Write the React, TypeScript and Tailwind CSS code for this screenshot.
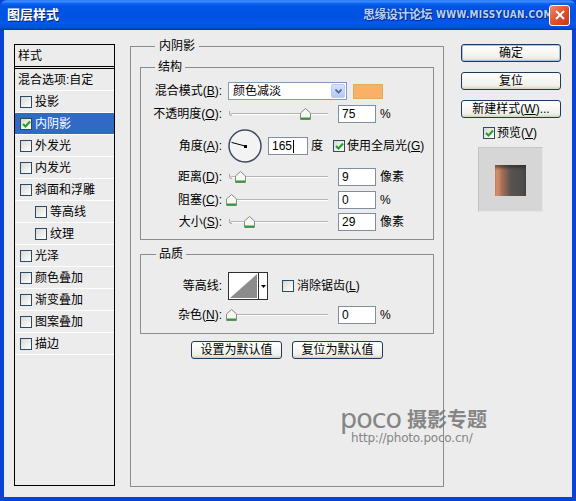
import React from "react";

// little XP style checkbox
function Check({ checked = false }: { checked?: boolean }) {
  return (
    <span className="w-[12px] h-[12px] shrink-0 border border-[#2c4a68] bg-[linear-gradient(135deg,#d8d8d2,#ffffff)] flex items-center justify-center">
      {checked && (
        <svg width="9" height="8" viewBox="0 0 9 8">
          <path d="M1 4 L3.5 6.5 L8 1.5" stroke="#21a121" strokeWidth="2" fill="none" />
        </svg>
      )}
    </span>
  );
}

function Slider({ pos }: { pos: number }) {
  return (
    <div className="relative w-[104px] h-[18px] ml-[4px] shrink-0">
      <div className="absolute left-[5px] right-[2px] top-[8px] h-[2px] bg-[#b4b4b4] border-b border-white" />
      <div className="absolute left-[3px] top-[6px] w-[3px] h-[5px] border-l border-b border-[#a8a8a8] rounded-bl-[3px]" />
      <svg className="absolute top-[3px]" style={{ left: pos }} width="11" height="12" viewBox="0 0 11 12">
        <path d="M0.5 5 L5.5 0.5 L10.5 5 V11.5 H0.5 Z" fill="#f7f7f2" stroke="#848c84" />
        <path d="M1 10.5 H10" stroke="#2f9a3a" strokeWidth="2" />
      </svg>
    </div>
  );
}

function NumBox({ value, w = "w-[38px]", ml = "ml-[8px]" }: { value: string; w?: string; ml?: string }) {
  return (
    <div className={`${w} ${ml} h-[18px] shrink-0 border border-[#7f8fa0] bg-white pl-[3px] text-[12px] leading-[16px]`}>{value}</div>
  );
}

function XpButton({ children, def = false, w = "w-[100px]" }: { children: React.ReactNode; def?: boolean; w?: string }) {
  return (
    <div
      className={`${w} h-[18px] flex items-center justify-center rounded-[3px] border border-[#1d3a5c] bg-[linear-gradient(to_bottom,#ffffff,#f0f0ea_80%,#d6d0c5)] text-[12px] leading-[14px] ${def ? "shadow-[inset_0_0_0_1px_#a8c2ee]" : ""}`}
    >
      {children}
    </div>
  );
}

const items: { name: string; indent?: boolean; checked?: boolean; selected?: boolean }[] = [
  { name: "投影" },
  { name: "内阴影", checked: true, selected: true },
  { name: "外发光" },
  { name: "内发光" },
  { name: "斜面和浮雕" },
  { name: "等高线", indent: true },
  { name: "纹理", indent: true },
  { name: "光泽" },
  { name: "颜色叠加" },
  { name: "渐变叠加" },
  { name: "图案叠加" },
  { name: "描边" },
];

export default function App() {
  return (
    <div className="relative w-[576px] h-[501px] flex flex-col bg-[#0842d8] text-black font-['Liberation_Sans','Noto_Sans_CJK_SC',sans-serif] text-[12px]">
      {/* title bar */}
      <div className="relative h-[30px] shrink-0 flex items-center rounded-t-[7px] bg-[linear-gradient(to_bottom,#2a7af5_0%,#3a8cff_6%,#0a63f0_12%,#0055e5_22%,#0052e0_60%,#0458f0_78%,#0050d8_92%,#0038a8_100%)]">
        <span className="ml-[7px] text-white font-bold text-[13px] leading-[16px] [text-shadow:1px_1px_0_#0a246a]">图层样式</span>
        <div className="absolute left-[363px] top-[7px] flex items-center gap-[4px] text-[#b4d2fa] [text-shadow:0_0_1px_#0a2a80,0_0_1px_#0a2a80,1px_1px_0_#0a2a80] leading-[16px]">
          <span className="text-[12px] font-bold tracking-[-0.5px]">思缘设计论坛</span>
          <span className="text-[10px] font-bold tracking-[0.3px] font-['DejaVu_Sans_Condensed','DejaVu_Sans',sans-serif]">WWW.MISSYUAN.COM</span>
        </div>
        <div className="relative ml-auto mr-[6px] w-[21px] h-[21px] rounded-[3px] border border-white bg-[linear-gradient(135deg,#f08a6a,#e2502c_50%,#c8381a)] flex items-center justify-center">
          <svg width="10" height="10" viewBox="0 0 10 10">
            <path d="M1 1 L9 9 M9 1 L1 9" stroke="#ffffff" strokeWidth="2" />
          </svg>
        </div>
      </div>

      {/* client area */}
      <div className="flex-1 mx-[4px] mb-[4px] bg-[#ececec] flex items-start pl-[10px]">
        {/* left style list */}
        <div className="mt-[14px] w-[101px] h-[442px] border border-black bg-[#ececec] flex flex-col">
          <div className="h-[21px] flex items-center pl-[3px] leading-[14px]">样式</div>
          <div className="h-[3px] border-y border-black" />
          <div className="h-[22px] flex items-center pl-[3px] border-b border-white leading-[14px]">混合选项:自定</div>
          {items.map((it) => (
            <div
              key={it.name}
              className={`h-[22px] flex items-center border-b border-white ${it.indent ? "pl-[20px]" : "pl-[5px]"} ${it.selected ? "bg-[#316ac5] text-white" : ""}`}
            >
              <Check checked={it.checked} />
              <span className="ml-[3px] leading-[14px]">{it.name}</span>
            </div>
          ))}
        </div>

        {/* middle group */}
        <fieldset className="mt-[9px] ml-[15px] w-[314px] h-[448px] border border-[#8c8c8c] px-[9px]">
          <legend className="ml-[15px] px-[4px] leading-[14px]">内阴影</legend>

          <fieldset className="mt-[7px] border border-[#8c8c8c] pb-[8px]">
            <legend className="ml-[14px] px-[3px] leading-[14px]">结构</legend>

            <div className="mt-[8px] h-[18px] flex items-center">
              <span className="w-[81px] text-right leading-[14px]">混合模式(<u>B</u>):</span>
              <div className="ml-[6px] w-[119px] h-[18px] border border-[#7f9db9] bg-white flex items-center">
                <span className="ml-[4px] leading-[14px]">颜色减淡</span>
                <div className="ml-auto mr-[1px] w-[14px] h-[14px] rounded-[2px] bg-[linear-gradient(to_bottom,#d6e2fd,#b2c8f6)] border border-[#b9ccf5] flex items-center justify-center">
                  <svg width="7" height="5" viewBox="0 0 7 5">
                    <path d="M0.5 0.5 L3.5 3.5 L6.5 0.5" stroke="#4d6185" strokeWidth="1.6" fill="none" />
                  </svg>
                </div>
              </div>
              <div className="ml-[6px] w-[30px] h-[15px] bg-[#fbb067] border border-[#e8a860]" />
            </div>

            <div className="mt-[5px] h-[18px] flex items-center">
              <span className="w-[81px] text-right leading-[14px]">不透明度(<u>O</u>):</span>
              <Slider pos={74} />
              <NumBox value="75" />
              <span className="ml-[4px]">%</span>
            </div>

            <div className="mt-[6px] h-[34px] flex items-center">
              <span className="w-[81px] text-right leading-[14px]">角度(<u>A</u>):</span>
              <svg className="ml-[6px] shrink-0" width="34" height="34" viewBox="0 0 34 34">
                <circle cx="17" cy="17" r="16" fill="#f3f3f3" stroke="#3e4a66" strokeWidth="1.5" />
                <path d="M17 17 L3.5 13.4" stroke="#000" strokeWidth="1" />
                <rect x="16" y="16" width="3" height="3" fill="#000" />
              </svg>
              <div className="ml-[6px] w-[40px] h-[18px] border border-[#7f8fa0] bg-white pl-[3px] leading-[16px] flex items-center">
                165<span className="w-[1px] h-[13px] bg-black ml-[1px]" />
              </div>
              <span className="ml-[3px] leading-[14px]">度</span>
              <span className="ml-[10px]"><Check checked /></span>
              <span className="ml-[2px] leading-[14px]">使用全局光(<u>G</u>)</span>
            </div>

            <div className="mt-[5px] h-[18px] flex items-center">
              <span className="w-[81px] text-right leading-[14px]">距离(<u>D</u>):</span>
              <Slider pos={9} />
              <NumBox value="9" />
              <span className="ml-[4px] leading-[14px]">像素</span>
            </div>

            <div className="mt-[5px] h-[18px] flex items-center">
              <span className="w-[81px] text-right leading-[14px]">阻塞(<u>C</u>):</span>
              <Slider pos={0} />
              <NumBox value="0" />
              <span className="ml-[4px]">%</span>
            </div>

            <div className="mt-[4px] h-[18px] flex items-center">
              <span className="w-[81px] text-right leading-[14px]">大小(<u>S</u>):</span>
              <Slider pos={18} />
              <NumBox value="29" />
              <span className="ml-[4px] leading-[14px]">像素</span>
            </div>
          </fieldset>

          <fieldset className="mt-[7px] border border-[#8c8c8c] pb-[9px]">
            <legend className="ml-[15px] px-[3px] leading-[14px]">品质</legend>

            <div className="mt-[11px] h-[28px] flex items-center">
              <span className="w-[81px] text-right leading-[14px]">等高线:</span>
              <div className="ml-[6px] w-[40px] h-[28px] border border-[#303030] bg-white flex">
                <svg width="29" height="26" viewBox="0 0 29 26" className="shrink-0">
                  <path d="M1 25 L28 1 L28 25 Z" fill="#8c8c8c" />
                </svg>
                <div className="flex-1 border-l border-[#303030] flex items-center justify-center">
                  <svg width="5" height="3" viewBox="0 0 5 3">
                    <path d="M0 0 H5 L2.5 3 Z" fill="#000" />
                  </svg>
                </div>
              </div>
              <span className="ml-[14px]"><Check /></span>
              <span className="ml-[3px] leading-[14px]">消除锯齿(<u>L</u>)</span>
            </div>

            <div className="mt-[6px] h-[18px] flex items-center">
              <span className="w-[81px] text-right leading-[14px]">杂色(<u>N</u>):</span>
              <Slider pos={0} />
              <NumBox value="0" />
              <span className="ml-[4px]">%</span>
            </div>
          </fieldset>

          <div className="mt-[7px] flex justify-center gap-[10px]">
            <XpButton w="w-[91px]">设置为默认值</XpButton>
            <XpButton w="w-[91px]">复位为默认值</XpButton>
          </div>
        </fieldset>

        {/* right column */}
        <div className="ml-[17px] w-[100px] flex flex-col">
          <div className="mt-[14px]"><XpButton def>确定</XpButton></div>
          <div className="mt-[10px]"><XpButton>复位</XpButton></div>
          <div className="mt-[10px]"><XpButton>新建样式(<u>W</u>)...</XpButton></div>
          <div className="mt-[8px] h-[14px] ml-[22px] flex items-center">
            <Check checked />
            <span className="ml-[2px] leading-[14px]">预览(<u>V</u>)</span>
          </div>
          <div className="mt-[7px] ml-[17px] w-[65px] h-[65px] bg-[#d6d6d6] border-t border-l border-[#c4c4c4] border-b border-r border-b-[#e6e6e6] border-r-[#e6e6e6] flex items-start">
            <div className="mt-[17px] ml-[16px] w-[31px] h-[31px] bg-[linear-gradient(to_right,#f2a070,#a8705a_22%,#5a5450_50%,#4a4a4a)] shadow-[inset_0_3px_3px_rgba(40,40,40,0.6)]" />
          </div>
        </div>
      </div>

      {/* site watermark over the dialog */}
      <div className="absolute left-[340px] top-[408px] flex flex-col text-[#7a7a7a] opacity-90 pointer-events-none">
        <div className="flex items-end leading-[22px]">
          <span className="text-[27px] font-['DejaVu_Sans',sans-serif] tracking-[-1px]">poco</span>
          <span className="ml-[6px] text-[20px] font-bold font-['Noto_Sans_CJK_SC',sans-serif]">摄影专题</span>
        </div>
        <span className="ml-[11px] mt-[2px] text-[12px] font-['DejaVu_Sans',sans-serif] leading-[13px] tracking-[-0.2px]">http://photo.poco.cn/</span>
      </div>
    </div>
  );
}
